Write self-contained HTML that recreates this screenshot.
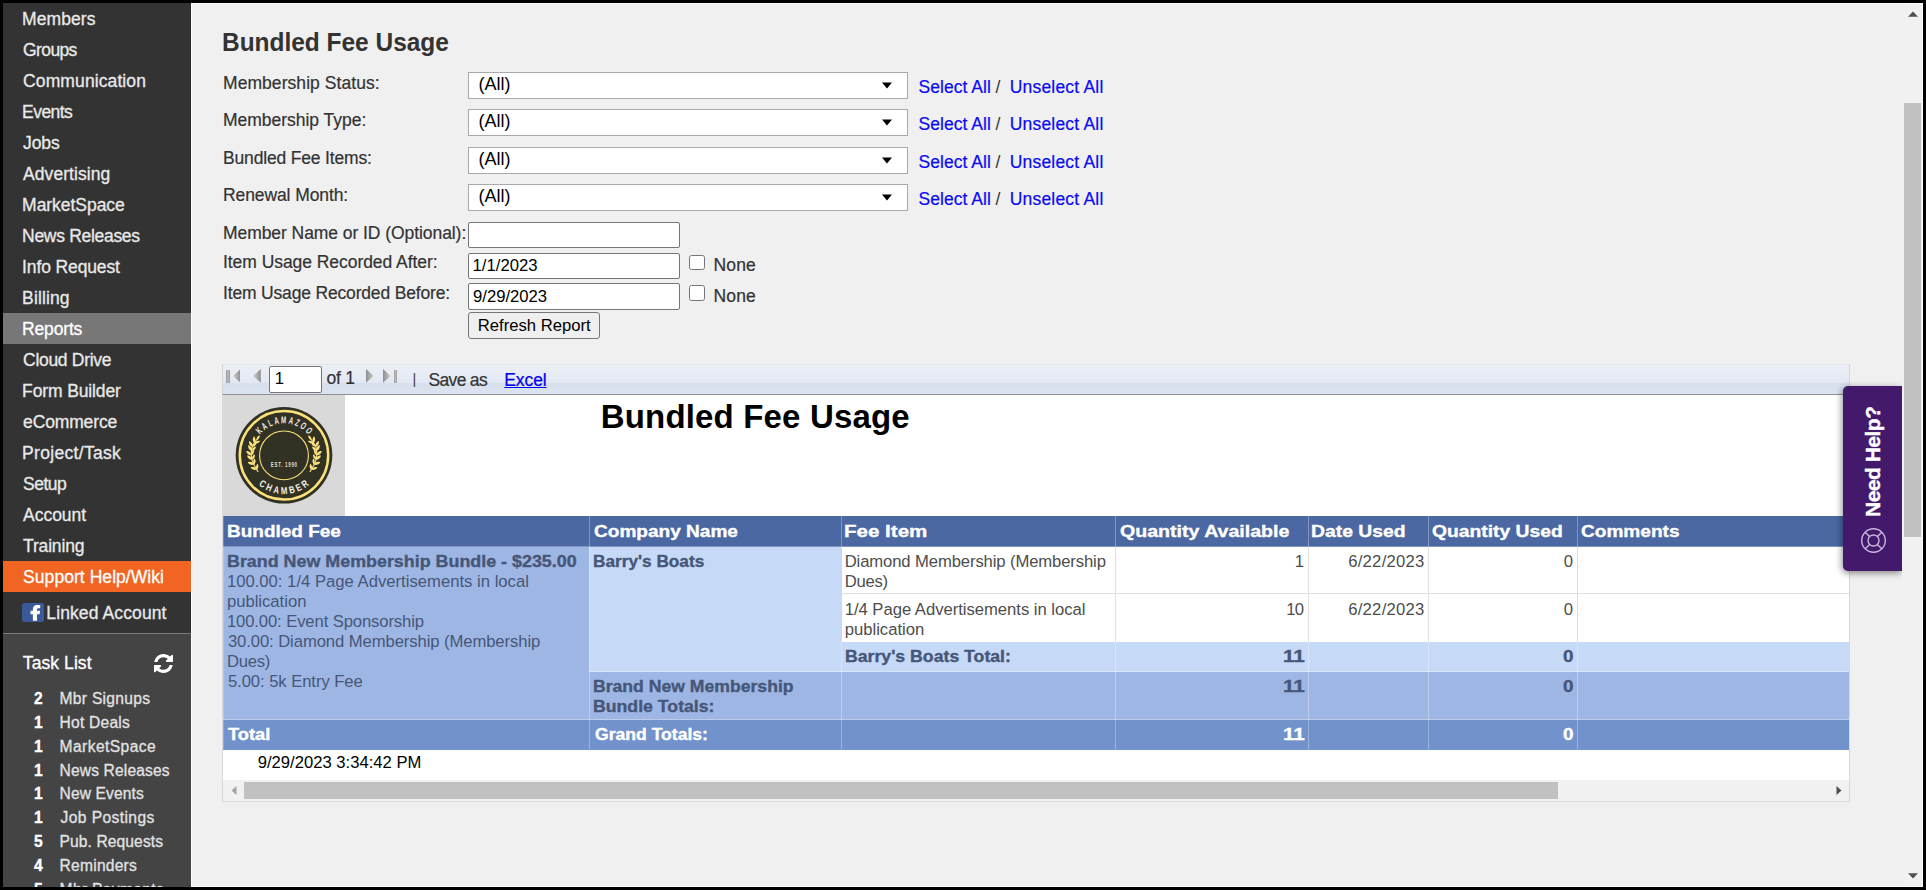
<!DOCTYPE html>
<html><head><meta charset="utf-8"><title>Bundled Fee Usage</title>
<style>
html,body{margin:0;padding:0}
body{width:1926px;height:890px;position:relative;overflow:hidden;background:#f0f0f0;font-family:"Liberation Sans",sans-serif}
.t{position:absolute;white-space:pre;display:block}
.r{position:absolute;display:block}
#frame{position:absolute;left:0;top:0;width:1926px;height:890px;box-sizing:border-box;border:3px solid #000;z-index:50}
</style></head><body>
<div class="r" style="left:3px;top:3px;width:187.8px;height:884px;background:#333;"></div>
<div class="r" style="left:190px;top:3px;width:0.8px;height:884px;background:#2b2b2b;"></div>
<div class="r" style="left:3px;top:313px;width:188px;height:31px;background:#777;"></div>
<div class="r" style="left:3px;top:561px;width:188px;height:31px;background:#f06522;"></div>
<div class="r" style="left:3px;top:634px;width:188px;height:253px;background:#444;"></div>
<div class="r" style="left:3px;top:633px;width:188px;height:1px;background:#7a7a7a;"></div>
<span class="t" style="left:22.10px;top:9.00px;font:normal 17.5px 'Liberation Sans',sans-serif;line-height:20px;color:#e9e9e9;letter-spacing:0.085px;-webkit-text-stroke:0.3px;">Members</span>
<span class="t" style="left:23.10px;top:40.00px;font:normal 17.5px 'Liberation Sans',sans-serif;line-height:20px;color:#e9e9e9;letter-spacing:-0.628px;-webkit-text-stroke:0.3px;">Groups</span>
<span class="t" style="left:23.10px;top:71.00px;font:normal 17.5px 'Liberation Sans',sans-serif;line-height:20px;color:#e9e9e9;letter-spacing:0.105px;-webkit-text-stroke:0.3px;">Communication</span>
<span class="t" style="left:22.10px;top:102.00px;font:normal 17.5px 'Liberation Sans',sans-serif;line-height:20px;color:#e9e9e9;letter-spacing:-0.570px;-webkit-text-stroke:0.3px;">Events</span>
<span class="t" style="left:23.10px;top:133.00px;font:normal 17.5px 'Liberation Sans',sans-serif;line-height:20px;color:#e9e9e9;letter-spacing:-0.140px;-webkit-text-stroke:0.3px;">Jobs</span>
<span class="t" style="left:23.10px;top:164.00px;font:normal 17.5px 'Liberation Sans',sans-serif;line-height:20px;color:#e9e9e9;letter-spacing:0.055px;-webkit-text-stroke:0.3px;">Advertising</span>
<span class="t" style="left:22.10px;top:195.00px;font:normal 17.5px 'Liberation Sans',sans-serif;line-height:20px;color:#e9e9e9;letter-spacing:-0.038px;-webkit-text-stroke:0.3px;">MarketSpace</span>
<span class="t" style="left:22.10px;top:226.00px;font:normal 17.5px 'Liberation Sans',sans-serif;line-height:20px;color:#e9e9e9;letter-spacing:-0.302px;-webkit-text-stroke:0.3px;">News Releases</span>
<span class="t" style="left:22.10px;top:257.00px;font:normal 17.5px 'Liberation Sans',sans-serif;line-height:20px;color:#e9e9e9;letter-spacing:-0.125px;-webkit-text-stroke:0.3px;">Info Request</span>
<span class="t" style="left:22.10px;top:288.00px;font:normal 17.5px 'Liberation Sans',sans-serif;line-height:20px;color:#e9e9e9;letter-spacing:0.122px;-webkit-text-stroke:0.3px;">Billing</span>
<span class="t" style="left:22.10px;top:319.00px;font:normal 17.5px 'Liberation Sans',sans-serif;line-height:20px;color:#fff;letter-spacing:-0.172px;-webkit-text-stroke:0.3px;">Reports</span>
<span class="t" style="left:23.10px;top:350.00px;font:normal 17.5px 'Liberation Sans',sans-serif;line-height:20px;color:#e9e9e9;letter-spacing:-0.310px;-webkit-text-stroke:0.3px;">Cloud Drive</span>
<span class="t" style="left:22.10px;top:381.00px;font:normal 17.5px 'Liberation Sans',sans-serif;line-height:20px;color:#e9e9e9;letter-spacing:-0.122px;-webkit-text-stroke:0.3px;">Form Builder</span>
<span class="t" style="left:23.10px;top:412.00px;font:normal 17.5px 'Liberation Sans',sans-serif;line-height:20px;color:#e9e9e9;letter-spacing:-0.147px;-webkit-text-stroke:0.3px;">eCommerce</span>
<span class="t" style="left:22.10px;top:443.00px;font:normal 17.5px 'Liberation Sans',sans-serif;line-height:20px;color:#e9e9e9;letter-spacing:0.312px;-webkit-text-stroke:0.3px;">Project/Task</span>
<span class="t" style="left:23.10px;top:474.00px;font:normal 17.5px 'Liberation Sans',sans-serif;line-height:20px;color:#e9e9e9;letter-spacing:-0.525px;-webkit-text-stroke:0.3px;">Setup</span>
<span class="t" style="left:23.10px;top:505.00px;font:normal 17.5px 'Liberation Sans',sans-serif;line-height:20px;color:#e9e9e9;letter-spacing:-0.045px;-webkit-text-stroke:0.3px;">Account</span>
<span class="t" style="left:23.10px;top:536.00px;font:normal 17.5px 'Liberation Sans',sans-serif;line-height:20px;color:#e9e9e9;letter-spacing:-0.178px;-webkit-text-stroke:0.3px;">Training</span>
<span class="t" style="left:23.10px;top:567.00px;font:normal 17.5px 'Liberation Sans',sans-serif;line-height:20px;color:#fff;letter-spacing:0.052px;-webkit-text-stroke:0.3px;">Support Help/Wiki</span>
<svg class="r" style="left:22px;top:603px" width="22" height="19" viewBox="0 0 22 19"><rect width="22" height="19" rx="2.5" fill="#3b5998"/><path d="M10.900 17.800V11.300H8.500V7.800H10.900V6.200C10.900 3.400 12.600 2 15.100 2C16.300 2 17.400 2.100 18.200 2.200V5.300H16.600C15.400 5.300 15 5.900 15 6.900V7.800H18.100L17.600 11.300H15V17.800Z" fill="#fff"/></svg>
<span class="t" style="left:46.30px;top:603.00px;font:normal 17.5px 'Liberation Sans',sans-serif;line-height:20px;color:#e9e9e9;letter-spacing:0.112px;-webkit-text-stroke:0.3px;">Linked Account</span>
<span class="t" style="left:22.80px;top:653.00px;font:normal 17.5px 'Liberation Sans',sans-serif;line-height:20px;color:#fff;letter-spacing:0.085px;-webkit-text-stroke:0.3px;">Task List</span>
<svg class="r" style="left:154px;top:654px" width="19" height="19" viewBox="0 0 1536 1536"><path fill="#fff" d="M1511 928q0 5-1 7-64 268-268 434.500T764 1536q-146 0-282.500-55T238 1324l-129 129q-19 19-45 19t-45-19-19-45V960q0-26 19-45t45-19h448q26 0 45 19t19 45-19 45l-137 137q71 66 161 102t187 36q134 0 250-65t186-179q11-17 53-117 8-23 30-23h192q13 0 22.500 9.500t9.500 22.500zm25-800v448q0 26-19 45t-45 19h-448q-26 0-45-19t-19-45 19-45l138-138Q969 256 768 256q-134 0-250 65T332 500q-11 17-53 117-8 23-30 23H50q-13 0-22.500-9.500T18 608v-7q65-268 270-434.500T768 0q146 0 284 55.500T1297 212l130-129q19-19 45-19t45 19 19 45z"/></svg>
<span class="t" style="left:33.90px;top:690.00px;font:bold 15.6px 'Liberation Sans',sans-serif;line-height:17px;color:#fff;-webkit-text-stroke:0.35px;">2</span>
<span class="t" style="left:59.60px;top:690.00px;font:normal 15.6px 'Liberation Sans',sans-serif;line-height:17px;color:#e2e2e2;letter-spacing:0.285px;-webkit-text-stroke:0.3px;">Mbr Signups</span>
<span class="t" style="left:33.90px;top:714.00px;font:bold 15.6px 'Liberation Sans',sans-serif;line-height:17px;color:#fff;-webkit-text-stroke:0.35px;">1</span>
<span class="t" style="left:59.60px;top:714.00px;font:normal 15.6px 'Liberation Sans',sans-serif;line-height:17px;color:#e2e2e2;letter-spacing:0.216px;-webkit-text-stroke:0.3px;">Hot Deals</span>
<span class="t" style="left:33.90px;top:738.00px;font:bold 15.6px 'Liberation Sans',sans-serif;line-height:17px;color:#fff;-webkit-text-stroke:0.35px;">1</span>
<span class="t" style="left:59.60px;top:738.00px;font:normal 15.6px 'Liberation Sans',sans-serif;line-height:17px;color:#e2e2e2;letter-spacing:0.420px;-webkit-text-stroke:0.3px;">MarketSpace</span>
<span class="t" style="left:33.90px;top:762.00px;font:bold 15.6px 'Liberation Sans',sans-serif;line-height:17px;color:#fff;-webkit-text-stroke:0.35px;">1</span>
<span class="t" style="left:59.60px;top:762.00px;font:normal 15.6px 'Liberation Sans',sans-serif;line-height:17px;color:#e2e2e2;letter-spacing:0.138px;-webkit-text-stroke:0.3px;">News Releases</span>
<span class="t" style="left:33.90px;top:785.00px;font:bold 15.6px 'Liberation Sans',sans-serif;line-height:17px;color:#fff;-webkit-text-stroke:0.35px;">1</span>
<span class="t" style="left:59.60px;top:785.00px;font:normal 15.6px 'Liberation Sans',sans-serif;line-height:17px;color:#e2e2e2;letter-spacing:0.110px;-webkit-text-stroke:0.3px;">New Events</span>
<span class="t" style="left:33.90px;top:809.00px;font:bold 15.6px 'Liberation Sans',sans-serif;line-height:17px;color:#fff;-webkit-text-stroke:0.35px;">1</span>
<span class="t" style="left:60.60px;top:809.00px;font:normal 15.6px 'Liberation Sans',sans-serif;line-height:17px;color:#e2e2e2;letter-spacing:0.400px;-webkit-text-stroke:0.3px;">Job Postings</span>
<span class="t" style="left:33.90px;top:833.00px;font:bold 15.6px 'Liberation Sans',sans-serif;line-height:17px;color:#fff;-webkit-text-stroke:0.35px;">5</span>
<span class="t" style="left:59.60px;top:833.00px;font:normal 15.6px 'Liberation Sans',sans-serif;line-height:17px;color:#e2e2e2;letter-spacing:0.092px;-webkit-text-stroke:0.3px;">Pub. Requests</span>
<span class="t" style="left:33.90px;top:857.00px;font:bold 15.6px 'Liberation Sans',sans-serif;line-height:17px;color:#fff;-webkit-text-stroke:0.35px;">4</span>
<span class="t" style="left:59.60px;top:857.00px;font:normal 15.6px 'Liberation Sans',sans-serif;line-height:17px;color:#e2e2e2;letter-spacing:0.224px;-webkit-text-stroke:0.3px;">Reminders</span>
<span class="t" style="left:33.90px;top:881.00px;font:bold 15.6px 'Liberation Sans',sans-serif;line-height:17px;color:#fff;-webkit-text-stroke:0.35px;">5</span>
<span class="t" style="left:59.60px;top:881.00px;font:normal 15.6px 'Liberation Sans',sans-serif;line-height:17px;color:#e2e2e2;letter-spacing:0.333px;-webkit-text-stroke:0.3px;">Mbr Payments</span>
<span class="t" style="left:221.77px;top:27.00px;font:bold 26.4px 'Liberation Sans',sans-serif;line-height:30px;color:#333;transform:scaleX(0.9263);transform-origin:0 0;">Bundled Fee Usage</span>
<span class="t" style="left:223.00px;top:73.00px;font:normal 17.5px 'Liberation Sans',sans-serif;line-height:20px;color:#333;letter-spacing:0.061px;-webkit-text-stroke:0.2px;">Membership Status:</span>
<span class="t" style="left:223.00px;top:110.00px;font:normal 17.5px 'Liberation Sans',sans-serif;line-height:20px;color:#333;letter-spacing:-0.025px;-webkit-text-stroke:0.2px;">Membership Type:</span>
<span class="t" style="left:223.00px;top:148.00px;font:normal 17.5px 'Liberation Sans',sans-serif;line-height:20px;color:#333;letter-spacing:-0.170px;-webkit-text-stroke:0.2px;">Bundled Fee Items:</span>
<span class="t" style="left:223.00px;top:185.00px;font:normal 17.5px 'Liberation Sans',sans-serif;line-height:20px;color:#333;letter-spacing:-0.101px;-webkit-text-stroke:0.2px;">Renewal Month:</span>
<span class="t" style="left:223.00px;top:223.00px;font:normal 17.5px 'Liberation Sans',sans-serif;line-height:20px;color:#333;letter-spacing:-0.065px;-webkit-text-stroke:0.2px;">Member Name or ID (Optional):</span>
<span class="t" style="left:223.00px;top:252.00px;font:normal 17.5px 'Liberation Sans',sans-serif;line-height:20px;color:#333;letter-spacing:-0.052px;-webkit-text-stroke:0.2px;">Item Usage Recorded After:</span>
<span class="t" style="left:223.00px;top:283.00px;font:normal 17.5px 'Liberation Sans',sans-serif;line-height:20px;color:#333;letter-spacing:-0.171px;-webkit-text-stroke:0.2px;">Item Usage Recorded Before:</span>
<div class="r" style="left:468px;top:72px;width:440px;height:27px;background:#fff;box-sizing:border-box;border:1px solid #a9a9a9;"></div>
<span class="t" style="left:478.60px;top:74.00px;font:normal 18px 'Liberation Sans',sans-serif;line-height:20px;color:#000;">(All)</span>
<svg class="r" style="left:881px;top:82px" width="12" height="7" viewBox="0 0 12 7"><path d="M1 0.500h10L6 6.500z" fill="#000"/></svg>
<span class="t" style="left:918.60px;top:77.00px;font:normal 17.5px 'Liberation Sans',sans-serif;line-height:20px;color:#0a0af5;letter-spacing:0.034px;-webkit-text-stroke:0.2px;">Select All</span>
<span class="t" style="left:995.50px;top:77.00px;font:normal 17.5px 'Liberation Sans',sans-serif;line-height:20px;color:#333;">/</span>
<span class="t" style="left:1009.70px;top:77.00px;font:normal 17.5px 'Liberation Sans',sans-serif;line-height:20px;color:#0a0af5;letter-spacing:0.195px;-webkit-text-stroke:0.2px;">Unselect All</span>
<div class="r" style="left:468px;top:109px;width:440px;height:27px;background:#fff;box-sizing:border-box;border:1px solid #a9a9a9;"></div>
<span class="t" style="left:478.60px;top:111.00px;font:normal 18px 'Liberation Sans',sans-serif;line-height:20px;color:#000;">(All)</span>
<svg class="r" style="left:881px;top:119px" width="12" height="7" viewBox="0 0 12 7"><path d="M1 0.500h10L6 6.500z" fill="#000"/></svg>
<span class="t" style="left:918.60px;top:114.00px;font:normal 17.5px 'Liberation Sans',sans-serif;line-height:20px;color:#0a0af5;letter-spacing:0.034px;-webkit-text-stroke:0.2px;">Select All</span>
<span class="t" style="left:995.50px;top:114.00px;font:normal 17.5px 'Liberation Sans',sans-serif;line-height:20px;color:#333;">/</span>
<span class="t" style="left:1009.70px;top:114.00px;font:normal 17.5px 'Liberation Sans',sans-serif;line-height:20px;color:#0a0af5;letter-spacing:0.195px;-webkit-text-stroke:0.2px;">Unselect All</span>
<div class="r" style="left:468px;top:147px;width:440px;height:27px;background:#fff;box-sizing:border-box;border:1px solid #a9a9a9;"></div>
<span class="t" style="left:478.60px;top:149.00px;font:normal 18px 'Liberation Sans',sans-serif;line-height:20px;color:#000;">(All)</span>
<svg class="r" style="left:881px;top:157px" width="12" height="7" viewBox="0 0 12 7"><path d="M1 0.500h10L6 6.500z" fill="#000"/></svg>
<span class="t" style="left:918.60px;top:152.00px;font:normal 17.5px 'Liberation Sans',sans-serif;line-height:20px;color:#0a0af5;letter-spacing:0.034px;-webkit-text-stroke:0.2px;">Select All</span>
<span class="t" style="left:995.50px;top:152.00px;font:normal 17.5px 'Liberation Sans',sans-serif;line-height:20px;color:#333;">/</span>
<span class="t" style="left:1009.70px;top:152.00px;font:normal 17.5px 'Liberation Sans',sans-serif;line-height:20px;color:#0a0af5;letter-spacing:0.195px;-webkit-text-stroke:0.2px;">Unselect All</span>
<div class="r" style="left:468px;top:184px;width:440px;height:27px;background:#fff;box-sizing:border-box;border:1px solid #a9a9a9;"></div>
<span class="t" style="left:478.60px;top:186.00px;font:normal 18px 'Liberation Sans',sans-serif;line-height:20px;color:#000;">(All)</span>
<svg class="r" style="left:881px;top:194px" width="12" height="7" viewBox="0 0 12 7"><path d="M1 0.500h10L6 6.500z" fill="#000"/></svg>
<span class="t" style="left:918.60px;top:189.00px;font:normal 17.5px 'Liberation Sans',sans-serif;line-height:20px;color:#0a0af5;letter-spacing:0.034px;-webkit-text-stroke:0.2px;">Select All</span>
<span class="t" style="left:995.50px;top:189.00px;font:normal 17.5px 'Liberation Sans',sans-serif;line-height:20px;color:#333;">/</span>
<span class="t" style="left:1009.70px;top:189.00px;font:normal 17.5px 'Liberation Sans',sans-serif;line-height:20px;color:#0a0af5;letter-spacing:0.195px;-webkit-text-stroke:0.2px;">Unselect All</span>
<div class="r" style="left:468px;top:222px;width:212px;height:26px;background:#fff;box-sizing:border-box;border:1px solid #767676;border-radius:2px;"></div>
<div class="r" style="left:468px;top:253px;width:212px;height:26px;background:#fff;box-sizing:border-box;border:1px solid #767676;border-radius:2px;"></div>
<div class="r" style="left:468px;top:283px;width:212px;height:27px;background:#fff;box-sizing:border-box;border:1px solid #767676;border-radius:2px;"></div>
<span class="t" style="left:472.60px;top:256.00px;font:normal 16.67px 'Liberation Sans',sans-serif;line-height:19px;color:#000;">1/1/2023</span>
<span class="t" style="left:473.00px;top:287.00px;font:normal 16.67px 'Liberation Sans',sans-serif;line-height:19px;color:#000;">9/29/2023</span>
<div class="r" style="left:689px;top:254.7px;width:15.5px;height:15.5px;background:#fff;box-sizing:border-box;border:1.25px solid #767676;border-radius:2.5px;"></div>
<span class="t" style="left:713.60px;top:255.00px;font:normal 17.5px 'Liberation Sans',sans-serif;line-height:20px;color:#333;letter-spacing:0.130px;-webkit-text-stroke:0.2px;">None</span>
<div class="r" style="left:689px;top:285.3px;width:15.5px;height:15.5px;background:#fff;box-sizing:border-box;border:1.25px solid #767676;border-radius:2.5px;"></div>
<span class="t" style="left:713.60px;top:286.00px;font:normal 17.5px 'Liberation Sans',sans-serif;line-height:20px;color:#333;letter-spacing:0.130px;-webkit-text-stroke:0.2px;">None</span>
<div class="r" style="left:468px;top:312px;width:132px;height:27px;background:#efefef;box-sizing:border-box;border:1px solid #767676;border-radius:3px;"></div>
<span class="t" style="left:477.80px;top:316.00px;font:normal 16.67px 'Liberation Sans',sans-serif;line-height:19px;color:#000;">Refresh Report</span>
<div class="r" style="left:222px;top:364px;width:1628px;height:31px;background:linear-gradient(to bottom,#eceff6 0%,#e3e8f3 60%,#d7dfee 64%,#dce3f0 100%);box-sizing:border-box;border-top:1px solid #e2e4ea;border-bottom:1px solid #8f8f8f;border-left:1px solid #d2d4da;border-right:1px solid #d2d4da;"></div>
<div class="r" style="left:222px;top:395px;width:1628px;height:407px;background:#fff;box-sizing:border-box;border:1px solid #d9d9d9;border-top:none;"></div>
<div class="r" style="left:226.4px;top:369.5px;width:3.5px;height:13.4px;background:linear-gradient(to right,#999,#bcbcbc 50%,#999);"></div>
<svg class="r" style="left:232.6px;top:369.3px" width="7.6" height="13.8"><defs><linearGradient id="pg1" x1="0" x2="1" y1="0" y2="0"><stop offset="0" stop-color="#cfcfcf"/><stop offset="1" stop-color="#8d8d8d"/></linearGradient></defs><polygon points="7.6,0 7.6,13.8 0,6.9" fill="url(#pg1)"/></svg>
<svg class="r" style="left:253.1px;top:369.3px" width="7.8" height="13.8"><defs><linearGradient id="pg2" x1="0" x2="1" y1="0" y2="0"><stop offset="0" stop-color="#cfcfcf"/><stop offset="1" stop-color="#8d8d8d"/></linearGradient></defs><polygon points="7.8,0 7.8,13.8 0,6.9" fill="url(#pg2)"/></svg>
<div class="r" style="left:269px;top:366px;width:53px;height:27px;background:#fff;box-sizing:border-box;border:1px solid #767676;border-radius:2px;"></div>
<span class="t" style="left:274.70px;top:369.00px;font:normal 16.67px 'Liberation Sans',sans-serif;line-height:19px;color:#000;">1</span>
<span class="t" style="left:326.60px;top:368.00px;font:normal 17.5px 'Liberation Sans',sans-serif;line-height:20px;color:#333;letter-spacing:-0.257px;-webkit-text-stroke:0.2px;">of 1</span>
<svg class="r" style="left:365.5px;top:369.3px" width="7.8" height="13.8"><defs><linearGradient id="pg3" x1="1" x2="0" y1="0" y2="0"><stop offset="0" stop-color="#cfcfcf"/><stop offset="1" stop-color="#8d8d8d"/></linearGradient></defs><polygon points="0,0 0,13.8 7.8,6.9" fill="url(#pg3)"/></svg>
<svg class="r" style="left:383.3px;top:369.3px" width="7.6" height="13.8"><defs><linearGradient id="pg4" x1="1" x2="0" y1="0" y2="0"><stop offset="0" stop-color="#cfcfcf"/><stop offset="1" stop-color="#8d8d8d"/></linearGradient></defs><polygon points="0,0 0,13.8 7.6,6.9" fill="url(#pg4)"/></svg>
<div class="r" style="left:393.7px;top:369.5px;width:3.5px;height:13.4px;background:linear-gradient(to right,#999,#bcbcbc 50%,#999);"></div>
<span class="t" style="left:412.60px;top:371.00px;font:normal 14.5px 'Liberation Sans',sans-serif;line-height:16px;color:#4a3a3a;">|</span>
<span class="t" style="left:428.60px;top:370.00px;font:normal 17.5px 'Liberation Sans',sans-serif;line-height:20px;color:#333;letter-spacing:-0.697px;-webkit-text-stroke:0.2px;">Save as</span>
<span class="t" style="left:504.30px;top:370.00px;font:normal 17.5px 'Liberation Sans',sans-serif;line-height:20px;color:#0000ee;letter-spacing:-0.102px;text-decoration:underline;-webkit-text-stroke:0.2px;">Excel</span>
<div class="r" style="left:223px;top:395px;width:122px;height:121px;background:#d9d9d9;"></div>
<svg class="r" style="left:234.2px;top:405.3px" width="100" height="100" viewBox="-50 -50 100 100">
<defs>
<path id="arcT" d="M-31.6 0A31.6 31.6 0 0 1 31.6 0"/>
<path id="arcB" d="M-39.1 0A39.1 39.1 0 0 0 39.1 0"/>
</defs>
<circle cy="0.3" r="48.3" fill="#313124"/>
<circle cy="0.3" r="44.2" fill="none" stroke="#fbe17a" stroke-width="2.5"/>
<circle cy="0.4" r="24.4" fill="none" stroke="#fbe17a" stroke-width="1.1"/>
<g font-family="Liberation Sans, sans-serif" font-weight="bold" fill="#f4f0e2">
<text font-size="10" letter-spacing="3.2" text-anchor="middle"><textPath href="#arcT" startOffset="51%" textLength="57" lengthAdjust="spacingAndGlyphs">KALAMAZOO</textPath></text>
<text font-size="10" letter-spacing="3.2" text-anchor="middle"><textPath href="#arcB" startOffset="51%" textLength="57.5" lengthAdjust="spacingAndGlyphs">CHAMBER</textPath></text>
<text x="-13.2" y="11.7" font-size="7.6" letter-spacing="1.2" fill="#e4dfca" textLength="27" lengthAdjust="spacingAndGlyphs">EST. 1990</text>
</g>
<g fill="#fbe17a" id="laurelL">
<path d="M-25.80 17.00C-26.72 15.35 -30.12 10.18 -31.30 7.10C-32.48 4.02 -32.90 1.28 -32.90 -1.50C-32.90 -4.28 -32.48 -6.98 -31.30 -9.60C-30.12 -12.22 -26.72 -15.93 -25.80 -17.20" fill="none" stroke="#fbe17a" stroke-width="1.1"/>
<path d="M0 0C1.6 -2.0 5.0 -2.1 7.0 -0.3C5.0 1.7 1.6 1.7 0 0Z" transform="translate(-27.12 14.62) rotate(-157.1) scale(0.95)"/>
<path d="M0 0C1.6 -2.0 5.0 -2.1 7.0 -0.3C5.0 1.7 1.6 1.7 0 0Z" transform="translate(-27.12 14.62) rotate(-81.1) scale(0.85)"/>
<path d="M0 0C1.6 -2.0 5.0 -2.1 7.0 -0.3C5.0 1.7 1.6 1.7 0 0Z" transform="translate(-29.98 9.48) rotate(-157.1) scale(0.95)"/>
<path d="M0 0C1.6 -2.0 5.0 -2.1 7.0 -0.3C5.0 1.7 1.6 1.7 0 0Z" transform="translate(-29.98 9.48) rotate(-81.1) scale(0.85)"/>
<path d="M0 0C1.6 -2.0 5.0 -2.1 7.0 -0.3C5.0 1.7 1.6 1.7 0 0Z" transform="translate(-31.75 4.69) rotate(-138.5) scale(0.95)"/>
<path d="M0 0C1.6 -2.0 5.0 -2.1 7.0 -0.3C5.0 1.7 1.6 1.7 0 0Z" transform="translate(-31.75 4.69) rotate(-62.5) scale(0.85)"/>
<path d="M0 0C1.6 -2.0 5.0 -2.1 7.0 -0.3C5.0 1.7 1.6 1.7 0 0Z" transform="translate(-32.58 0.22) rotate(-138.5) scale(0.95)"/>
<path d="M0 0C1.6 -2.0 5.0 -2.1 7.0 -0.3C5.0 1.7 1.6 1.7 0 0Z" transform="translate(-32.58 0.22) rotate(-62.5) scale(0.85)"/>
<path d="M0 0C1.6 -2.0 5.0 -2.1 7.0 -0.3C5.0 1.7 1.6 1.7 0 0Z" transform="translate(-32.39 -4.09) rotate(-116.8) scale(0.95)"/>
<path d="M0 0C1.6 -2.0 5.0 -2.1 7.0 -0.3C5.0 1.7 1.6 1.7 0 0Z" transform="translate(-32.39 -4.09) rotate(-40.8) scale(0.85)"/>
<path d="M0 0C1.6 -2.0 5.0 -2.1 7.0 -0.3C5.0 1.7 1.6 1.7 0 0Z" transform="translate(-31.56 -8.30) rotate(-116.8) scale(0.95)"/>
<path d="M0 0C1.6 -2.0 5.0 -2.1 7.0 -0.3C5.0 1.7 1.6 1.7 0 0Z" transform="translate(-31.56 -8.30) rotate(-40.8) scale(0.85)"/>
<path d="M0 0C1.6 -2.0 5.0 -2.1 7.0 -0.3C5.0 1.7 1.6 1.7 0 0Z" transform="translate(-29.54 -12.03) rotate(-92.1) scale(0.95)"/>
<path d="M0 0C1.6 -2.0 5.0 -2.1 7.0 -0.3C5.0 1.7 1.6 1.7 0 0Z" transform="translate(-29.54 -12.03) rotate(-16.1) scale(0.85)"/>
<path d="M0 0C1.6 -2.0 5.0 -2.1 7.0 -0.3C5.0 1.7 1.6 1.7 0 0Z" transform="translate(-27.34 -15.07) rotate(-54.1) scale(0.8)"/>
</g>
<use href="#laurelL" transform="scale(-1 1)"/>
</svg>
<span class="t" style="left:600.80px;top:398.00px;font:bold 33px 'Liberation Sans',sans-serif;line-height:37px;color:#000;letter-spacing:0.164px;">Bundled Fee Usage</span>
<div class="r" style="left:223px;top:516px;width:1626px;height:31px;background:#4c68a2;"></div>
<div class="r" style="left:223px;top:547px;width:366px;height:173px;background:#9eb6e4;"></div>
<div class="r" style="left:589px;top:547px;width:253px;height:125px;background:#c6daf8;"></div>
<div class="r" style="left:841px;top:642px;width:1008px;height:30px;background:#c6daf8;"></div>
<div class="r" style="left:589px;top:672px;width:1260px;height:48px;background:#9eb6e4;"></div>
<div class="r" style="left:223px;top:720px;width:1626px;height:29.5px;background:#7292cc;"></div>
<div class="r" style="left:589px;top:516px;width:1px;height:31px;background:rgba(255,255,255,0.30);"></div>
<div class="r" style="left:589px;top:642px;width:1px;height:107px;background:rgba(255,255,255,0.30);"></div>
<div class="r" style="left:841px;top:516px;width:1px;height:31px;background:rgba(255,255,255,0.30);"></div>
<div class="r" style="left:841px;top:642px;width:1px;height:107px;background:rgba(255,255,255,0.30);"></div>
<div class="r" style="left:1115px;top:516px;width:1px;height:31px;background:rgba(255,255,255,0.30);"></div>
<div class="r" style="left:1115px;top:642px;width:1px;height:107px;background:rgba(255,255,255,0.30);"></div>
<div class="r" style="left:1308px;top:516px;width:1px;height:31px;background:rgba(255,255,255,0.30);"></div>
<div class="r" style="left:1308px;top:642px;width:1px;height:107px;background:rgba(255,255,255,0.30);"></div>
<div class="r" style="left:1428px;top:516px;width:1px;height:31px;background:rgba(255,255,255,0.30);"></div>
<div class="r" style="left:1428px;top:642px;width:1px;height:107px;background:rgba(255,255,255,0.30);"></div>
<div class="r" style="left:1577px;top:516px;width:1px;height:31px;background:rgba(255,255,255,0.30);"></div>
<div class="r" style="left:1577px;top:642px;width:1px;height:107px;background:rgba(255,255,255,0.30);"></div>
<div class="r" style="left:1115px;top:547px;width:1px;height:95px;background:#dedede;"></div>
<div class="r" style="left:1308px;top:547px;width:1px;height:95px;background:#dedede;"></div>
<div class="r" style="left:1428px;top:547px;width:1px;height:95px;background:#dedede;"></div>
<div class="r" style="left:1577px;top:547px;width:1px;height:95px;background:#dedede;"></div>
<div class="r" style="left:589px;top:547px;width:1px;height:95px;background:rgba(255,255,255,0.30);"></div>
<div class="r" style="left:223px;top:516px;width:1px;height:233px;background:rgba(255,255,255,0.22);"></div>
<div class="r" style="left:842px;top:593px;width:1007px;height:1px;background:#dedede;"></div>
<div class="r" style="left:223px;top:546px;width:1626px;height:1px;background:rgba(255,255,255,0.30);"></div>
<div class="r" style="left:841px;top:641px;width:1008px;height:1px;background:rgba(255,255,255,0.30);"></div>
<div class="r" style="left:589px;top:671px;width:1260px;height:1px;background:rgba(255,255,255,0.30);"></div>
<div class="r" style="left:223px;top:719px;width:1626px;height:1px;background:rgba(255,255,255,0.30);"></div>
<span class="t" style="left:226.76px;top:522.00px;font:bold 16.67px 'Liberation Sans',sans-serif;line-height:19px;color:#fff;transform:scaleX(1.1399);transform-origin:0 0;-webkit-text-stroke:0.35px;">Bundled Fee</span>
<span class="t" style="left:594.30px;top:522.00px;font:bold 16.67px 'Liberation Sans',sans-serif;line-height:19px;color:#fff;transform:scaleX(1.1431);transform-origin:0 0;-webkit-text-stroke:0.35px;">Company Name</span>
<span class="t" style="left:844.47px;top:522.00px;font:bold 16.67px 'Liberation Sans',sans-serif;line-height:19px;color:#fff;transform:scaleX(1.2331);transform-origin:0 0;-webkit-text-stroke:0.35px;">Fee Item</span>
<span class="t" style="left:1119.70px;top:522.00px;font:bold 16.67px 'Liberation Sans',sans-serif;line-height:19px;color:#fff;transform:scaleX(1.1757);transform-origin:0 0;-webkit-text-stroke:0.35px;">Quantity Available</span>
<span class="t" style="left:1311.44px;top:522.00px;font:bold 16.67px 'Liberation Sans',sans-serif;line-height:19px;color:#fff;transform:scaleX(1.1607);transform-origin:0 0;-webkit-text-stroke:0.35px;">Date Used</span>
<span class="t" style="left:1432.00px;top:522.00px;font:bold 16.67px 'Liberation Sans',sans-serif;line-height:19px;color:#fff;transform:scaleX(1.1575);transform-origin:0 0;-webkit-text-stroke:0.35px;">Quantity Used</span>
<span class="t" style="left:1580.70px;top:522.00px;font:bold 16.67px 'Liberation Sans',sans-serif;line-height:19px;color:#fff;transform:scaleX(1.1443);transform-origin:0 0;-webkit-text-stroke:0.35px;">Comments</span>
<span class="t" style="left:226.83px;top:552.00px;font:bold 16.67px 'Liberation Sans',sans-serif;line-height:19px;color:#465678;transform:scaleX(1.0731);transform-origin:0 0;-webkit-text-stroke:0.35px;">Brand New Membership Bundle - $235.00</span>
<span class="t" style="left:226.90px;top:572.00px;font:normal 16.67px 'Liberation Sans',sans-serif;line-height:19px;color:#465678;letter-spacing:0.004px;">100.00: 1/4 Page Advertisements in local</span>
<span class="t" style="left:226.90px;top:592.00px;font:normal 16.67px 'Liberation Sans',sans-serif;line-height:19px;color:#465678;letter-spacing:-0.008px;">publication</span>
<span class="t" style="left:226.90px;top:612.00px;font:normal 16.67px 'Liberation Sans',sans-serif;line-height:19px;color:#465678;letter-spacing:-0.119px;">100.00: Event Sponsorship</span>
<span class="t" style="left:227.90px;top:632.00px;font:normal 16.67px 'Liberation Sans',sans-serif;line-height:19px;color:#465678;letter-spacing:-0.092px;">30.00: Diamond Membership (Membership</span>
<span class="t" style="left:226.90px;top:652.00px;font:normal 16.67px 'Liberation Sans',sans-serif;line-height:19px;color:#465678;letter-spacing:-0.273px;">Dues)</span>
<span class="t" style="left:227.90px;top:672.00px;font:normal 16.67px 'Liberation Sans',sans-serif;line-height:19px;color:#465678;letter-spacing:-0.073px;">5.00: 5k Entry Fee</span>
<span class="t" style="left:593.47px;top:552.00px;font:bold 16.67px 'Liberation Sans',sans-serif;line-height:19px;color:#465678;transform:scaleX(1.0330);transform-origin:0 0;-webkit-text-stroke:0.35px;">Barry's Boats</span>
<span class="t" style="left:593.44px;top:677.00px;font:bold 16.67px 'Liberation Sans',sans-serif;line-height:19px;color:#465678;transform:scaleX(1.0570);transform-origin:0 0;-webkit-text-stroke:0.35px;">Brand New Membership</span>
<span class="t" style="left:593.44px;top:697.00px;font:bold 16.67px 'Liberation Sans',sans-serif;line-height:19px;color:#465678;transform:scaleX(1.0617);transform-origin:0 0;-webkit-text-stroke:0.35px;">Bundle Totals:</span>
<span class="t" style="left:594.50px;top:725.00px;font:bold 16.67px 'Liberation Sans',sans-serif;line-height:19px;color:#fff;transform:scaleX(1.0550);transform-origin:0 0;-webkit-text-stroke:0.35px;">Grand Totals:</span>
<span class="t" style="left:227.90px;top:725.00px;font:bold 16.67px 'Liberation Sans',sans-serif;line-height:19px;color:#fff;transform:scaleX(1.0966);transform-origin:0 0;-webkit-text-stroke:0.35px;">Total</span>
<span class="t" style="left:844.70px;top:552.00px;font:normal 16.67px 'Liberation Sans',sans-serif;line-height:19px;color:#4d4d4d;letter-spacing:-0.120px;">Diamond Membership (Membership</span>
<span class="t" style="left:844.70px;top:572.00px;font:normal 16.67px 'Liberation Sans',sans-serif;line-height:19px;color:#4d4d4d;letter-spacing:-0.273px;">Dues)</span>
<span class="t" style="left:844.70px;top:600.00px;font:normal 16.67px 'Liberation Sans',sans-serif;line-height:19px;color:#4d4d4d;letter-spacing:-0.028px;">1/4 Page Advertisements in local</span>
<span class="t" style="left:844.70px;top:620.00px;font:normal 16.67px 'Liberation Sans',sans-serif;line-height:19px;color:#4d4d4d;letter-spacing:-0.008px;">publication</span>
<span class="t" style="left:844.64px;top:647.00px;font:bold 16.67px 'Liberation Sans',sans-serif;line-height:19px;color:#465678;transform:scaleX(1.0609);transform-origin:0 0;-webkit-text-stroke:0.35px;">Barry's Boats Total:</span>
<span class="t" style="left:1294.80px;top:552.00px;font:normal 16.67px 'Liberation Sans',sans-serif;line-height:19px;color:#4d4d4d;">1</span>
<span class="t" style="left:1286.30px;top:600.00px;font:normal 16.67px 'Liberation Sans',sans-serif;line-height:19px;color:#4d4d4d;letter-spacing:-0.768px;">10</span>
<span class="t" style="left:1348.20px;top:552.00px;font:normal 16.67px 'Liberation Sans',sans-serif;line-height:19px;color:#4d4d4d;letter-spacing:0.257px;">6/22/2023</span>
<span class="t" style="left:1348.20px;top:600.00px;font:normal 16.67px 'Liberation Sans',sans-serif;line-height:19px;color:#4d4d4d;letter-spacing:0.257px;">6/22/2023</span>
<span class="t" style="left:1563.70px;top:552.00px;font:normal 16.67px 'Liberation Sans',sans-serif;line-height:19px;color:#4d4d4d;">0</span>
<span class="t" style="left:1563.70px;top:600.00px;font:normal 16.67px 'Liberation Sans',sans-serif;line-height:19px;color:#4d4d4d;">0</span>
<span class="t" style="left:1282.66px;top:647.00px;font:bold 16.67px 'Liberation Sans',sans-serif;line-height:19px;color:#465678;transform:scaleX(1.2419);transform-origin:0 0;-webkit-text-stroke:0.35px;">11</span>
<span class="t" style="left:1562.50px;top:647.00px;font:bold 16.67px 'Liberation Sans',sans-serif;line-height:19px;color:#465678;transform:scaleX(1.1331);transform-origin:0 0;-webkit-text-stroke:0.35px;">0</span>
<span class="t" style="left:1282.66px;top:677.00px;font:bold 16.67px 'Liberation Sans',sans-serif;line-height:19px;color:#465678;transform:scaleX(1.2419);transform-origin:0 0;-webkit-text-stroke:0.35px;">11</span>
<span class="t" style="left:1562.50px;top:677.00px;font:bold 16.67px 'Liberation Sans',sans-serif;line-height:19px;color:#465678;transform:scaleX(1.1331);transform-origin:0 0;-webkit-text-stroke:0.35px;">0</span>
<span class="t" style="left:1282.66px;top:725.00px;font:bold 16.67px 'Liberation Sans',sans-serif;line-height:19px;color:#fff;transform:scaleX(1.2419);transform-origin:0 0;-webkit-text-stroke:0.35px;">11</span>
<span class="t" style="left:1562.50px;top:725.00px;font:bold 16.67px 'Liberation Sans',sans-serif;line-height:19px;color:#fff;transform:scaleX(1.1331);transform-origin:0 0;-webkit-text-stroke:0.35px;">0</span>
<span class="t" style="left:257.70px;top:753.00px;font:normal 16.6px 'Liberation Sans',sans-serif;line-height:19px;color:#000;letter-spacing:0.022px;">9/29/2023 3:34:42 PM</span>
<div class="r" style="left:223px;top:780px;width:1626px;height:21px;background:#f1f1f1;"></div>
<div class="r" style="left:244px;top:782px;width:1314px;height:16.5px;background:#c1c1c1;"></div>
<svg class="r" style="left:231px;top:786px" width="6" height="9"><polygon points="5.5,0 5.5,9 0.5,4.500" fill="#a3a3a3"/></svg>
<svg class="r" style="left:1835.5px;top:786px" width="6" height="9"><polygon points="0.500,0 0.5,9 5.5,4.5" fill="#505050"/></svg>
<div class="r" style="left:1843px;top:386px;width:59px;height:185px;background:#42196b;border-radius:5px 0 0 5px;box-shadow:-1px 2px 7px rgba(0,0,0,0.45);"></div>
<span class="t" style="left:1881px;top:516.8px;font:bold 21px 'Liberation Sans',sans-serif;line-height:24px;color:#fff;transform-origin:0 0;transform:rotate(-90deg) translateY(-19.65px);letter-spacing:-0.5px;-webkit-text-stroke:0.4px;">Need Help?</span>
<svg class="r" style="left:1859px;top:526px" width="29" height="29" viewBox="-14.5 -14.500 29 29"><g fill="none" stroke="#cbb6dc" stroke-width="1.4"><circle r="11.8"/><circle r="5.500"/><path d="M3.900 3.900L8.300 8.300M-3.900 3.900L-8.300 8.300M3.900 -3.900L8.300 -8.300M-3.900 -3.900L-8.300 -8.300"/></g></svg>

<div class="r" style="left:1902px;top:4px;width:20px;height:882px;background:#f1f1f1;"></div>
<div class="r" style="left:1904px;top:103px;width:17px;height:434px;background:#c1c1c1;"></div>
<svg class="r" style="left:1907.5px;top:11.3px" width="10" height="6"><polygon points="0,5.700 10,5.700 5,0.500" fill="#505050"/></svg>
<svg class="r" style="left:1907.5px;top:872.6px" width="10" height="6"><polygon points="0,0.300 10,0.300 5,5.500" fill="#505050"/></svg>
<div class="r" style="left:1921.8px;top:3px;width:1.2px;height:884px;background:#fff;"></div>
<div class="r" style="left:191px;top:885.9px;width:1732px;height:1.1px;background:#fff;"></div>
<div class="r" style="left:191px;top:3px;width:1732px;height:1px;background:#fff;"></div>
<div class="r" style="left:190.8px;top:3px;width:1.2px;height:884px;background:#fff;"></div>
<div id="frame"></div>
</body></html>
